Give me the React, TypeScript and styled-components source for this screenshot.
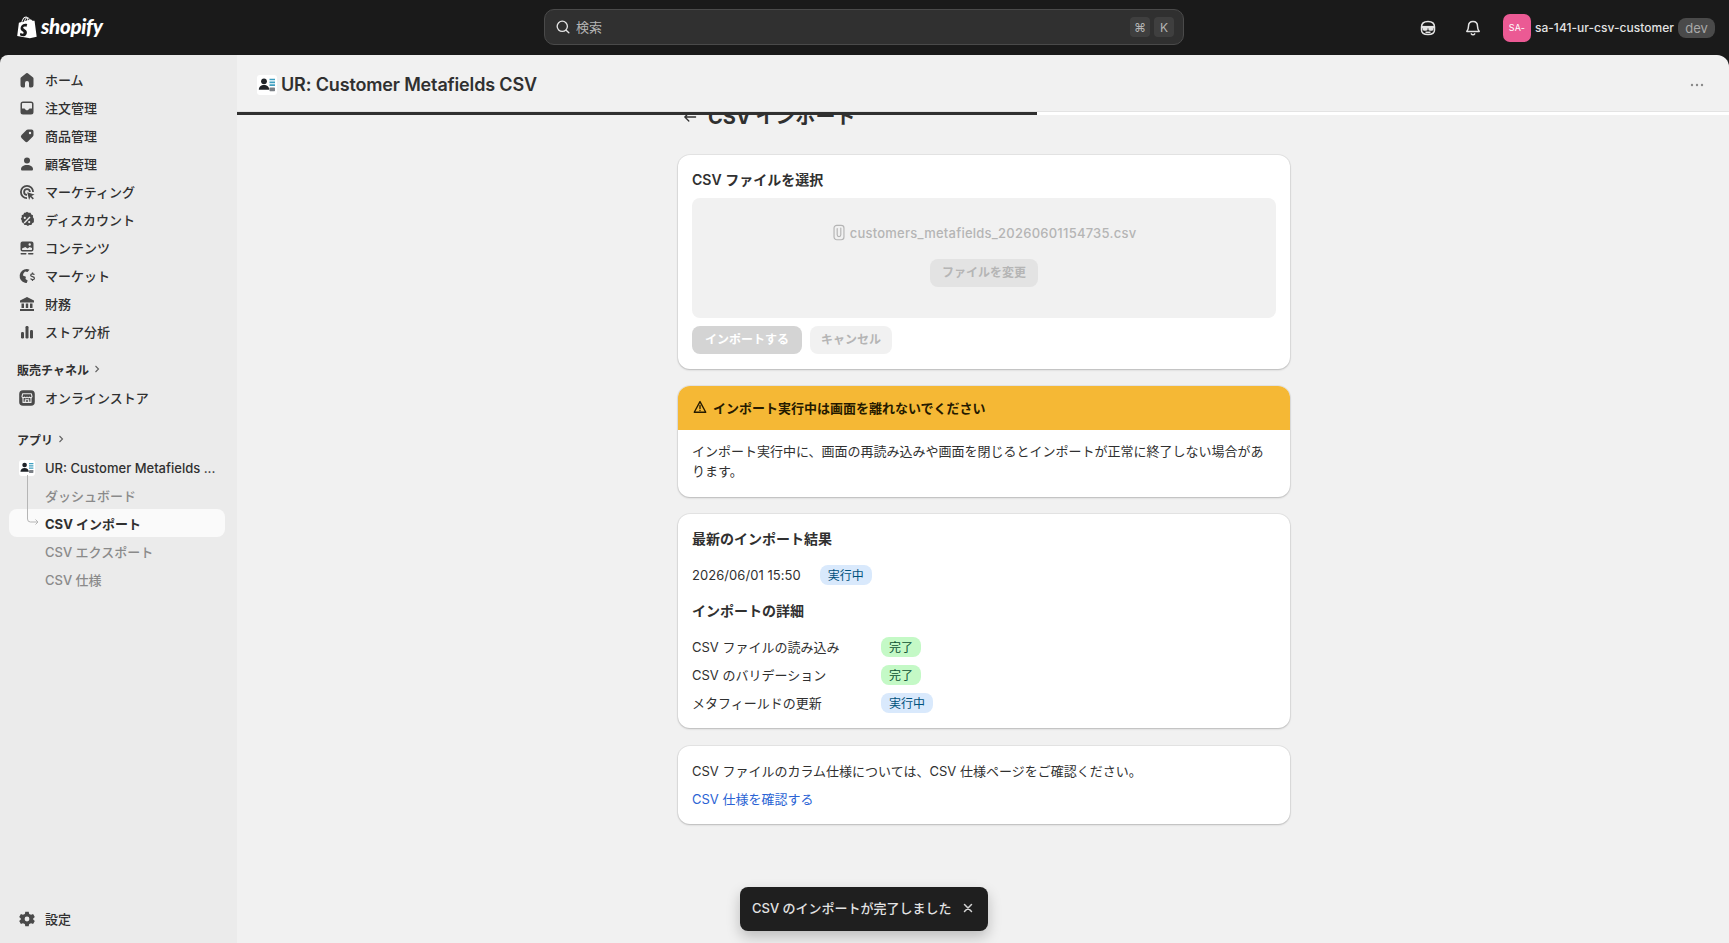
import React from "react"
import styled, { createGlobalStyle } from "styled-components"

const FONT = `Inter, "Noto Sans CJK JP", sans-serif`

const GlobalStyle = createGlobalStyle`
  html, body {
    margin: 0;
    padding: 0;
    height: 100%;
    overflow: hidden;
    background: #1a1a1a;
    font-family: ${FONT};
    font-size: 13px;
    color: #303030;
  }
  #root { height: 100%; }
  * { box-sizing: border-box; }
`

const Shell = styled.div`
  display: flex;
  flex-direction: column;
  height: 943px;
`

/* top bar */
const TopBar = styled.header`
  flex: 0 0 55px;
  display: flex;
  align-items: center;
  position: relative;
  background: #1a1a1a;
  padding: 0 14px 0 17px;
`
const Logo = styled.div`
  display: flex;
  align-items: center;
  gap: 4px;
  color: #fff;
`
const LogoWord = styled.span`
  font-family: Lato, sans-serif;
  font-style: italic;
  font-weight: 900;
  font-size: 20.5px;
  letter-spacing: -0.3px;
  line-height: 1;
  margin-top: -2px;
`
const SearchBox = styled.div`
  position: absolute;
  left: 544px;
  top: 9px;
  width: 640px;
  height: 36px;
  display: flex;
  align-items: center;
  gap: 4px;
  padding: 0 9px 0 9px;
  background: #303030;
  border: 1px solid #4a4a4a;
  border-radius: 10px;
  color: #b5b5b5;
`
const SearchLabel = styled.span`
  flex: 1;
  padding-bottom: 1px;
`
const Key = styled.span`
  width: 20px;
  height: 20px;
  display: flex;
  align-items: center;
  justify-content: center;
  border-radius: 4px;
  background: #3f3f3f;
  color: #b5b5b5;
  font-size: 12px;
`
const TopRight = styled.div`
  margin-left: auto;
  display: flex;
  align-items: center;
`
const TopIcon = styled.span<{ $gap: number }>`
  width: 20px;
  height: 20px;
  display: flex;
  color: #e3e3e3;
  margin-right: ${(p) => p.$gap}px;
`
const Avatar = styled.span`
  width: 28px;
  height: 28px;
  display: flex;
  align-items: center;
  justify-content: center;
  border-radius: 7px;
  background: #eb5a94;
  color: #fff;
  font-size: 9px;
  letter-spacing: 0.2px;
`
const StoreName = styled.span`
  margin-left: 4px;
  color: #e3e3e3;
  font-size: 12px;
  font-weight: 450;
  letter-spacing: 0.03px;
`
const DevBadge = styled.span`
  margin-left: 4px;
  width: 37px;
  height: 20px;
  display: flex;
  align-items: center;
  justify-content: center;
  border-radius: 8px;
  background: #4a4a4a;
  color: #a8a8a8;
  font-size: 13px;
`

/* panels under the top bar */
const Body = styled.div`
  flex: 1;
  min-height: 0;
  display: flex;
`
const Sidebar = styled.nav`
  flex: 0 0 237px;
  display: flex;
  flex-direction: column;
  padding: 10px 12px 11px 9px;
  background: #ebebeb;
  border-top-left-radius: 8px;
`
const NavItem = styled.div<{ $active?: boolean; $child?: boolean }>`
  flex: 0 0 28px;
  height: 28px;
  display: flex;
  align-items: center;
  gap: 8px;
  padding-left: ${(p) => (p.$child ? 36 : 8)}px;
  border-radius: 8px;
  font-weight: ${(p) => (p.$active ? 650 : p.$child ? 450 : 500)};
  color: ${(p) => (p.$active ? "#303030" : p.$child ? "#8a8a8a" : "#303030")};
  background: ${(p) => (p.$active ? "#fafafa" : "transparent")};
  white-space: nowrap;
`
const NavIcon = styled.span`
  flex: 0 0 20px;
  width: 20px;
  height: 20px;
  margin-top: 1px;
  display: flex;
  color: #4a4a4a;
`
const NavLabel = styled.span<{ $latin?: boolean }>`
  overflow: hidden;
  text-overflow: ellipsis;
  padding-top: ${(p) => (p.$latin ? 2 : 0)}px;
`
const SectionLabel = styled.div<{ $top: number }>`
  flex: 0 0 28px;
  display: flex;
  align-items: center;
  gap: 2px;
  margin-top: ${(p) => p.$top}px;
  padding-left: 8px;
  font-size: 12px;
  font-weight: 600;
  color: #303030;
`
const AppIconBox = styled.span<{ $size: number }>`
  flex: 0 0 ${(p) => p.$size}px;
  width: ${(p) => p.$size}px;
  height: ${(p) => p.$size}px;
  display: flex;
  margin: ${(p) => (p.$size < 20 ? "auto" : "0")};
  border-radius: 3px;
  background: #fff;
`
const AppTree = styled.div`
  position: relative;
`
const TreeLine = styled.svg`
  position: absolute;
  left: 16px;
  top: 22px;
  width: 16px;
  height: 54px;
  z-index: 1;
  color: #b5b5b5;
`
const SidebarFoot = styled.div`
  margin-top: auto;
`

const Main = styled.main`
  flex: 1;
  min-width: 0;
  display: flex;
  flex-direction: column;
  background: #f1f1f1;
  border-top-right-radius: 12px;
`
const AppHeader = styled.div`
  flex: 0 0 57px;
  display: flex;
  align-items: center;
  gap: 4px;
  padding: 3px 22px 0 20px;
  border-bottom: 1px solid #e3e3e3;
`
const AppTitle = styled.h1`
  margin: 0;
  font-size: 18px;
  font-weight: 600;
  letter-spacing: -0.15px;
  color: #303030;
`
const MoreDots = styled.span`
  margin-left: auto;
  width: 20px;
  height: 20px;
  display: flex;
  color: #8a8a8a;
`
const ProgressTrack = styled.div`
  flex: 0 0 3px;
  background: #fff;
`
const ProgressFill = styled.div`
  height: 3px;
  background: #303030;
`
const Scroll = styled.div`
  flex: 1;
  min-height: 0;
  overflow: hidden;
  position: relative;
  padding-left: 2px;
`
const Column = styled.div`
  width: 612px;
  margin: -17px auto 0 auto;
  display: flex;
  flex-direction: column;
  gap: 17.6px;
`
const PageHead = styled.div`
  height: 39px;
  padding-bottom: 2px;
  display: flex;
  align-items: center;
  gap: 10px;
  padding-left: 4px;
`
const PageTitle = styled.h2`
  margin: 0;
  font-size: 20px;
  font-weight: 700;
  line-height: 28px;
  color: #303030;
`
const Card = styled.section`
  background: #fff;
  border-radius: 12px;
  overflow: hidden;
  box-shadow: 0 1px 2px rgba(26, 26, 26, 0.22), 0 0 0 1px rgba(26, 26, 26, 0.05);
`
const ResultCard = styled(Card)`
  margin: -1px 0 1px;
`
const CardBody = styled.div`
  padding: 15px 14px;
`
const CardTitle = styled.h3`
  margin: 0;
  font-size: 14px;
  font-weight: 600;
  line-height: 20px;
  color: #303030;
`
const DropZone = styled.div`
  height: 120px;
  margin-top: 8px;
  display: flex;
  flex-direction: column;
  align-items: center;
  padding-top: 25px;
  gap: 16px;
  background: #f1f1f1;
  border-radius: 8px;
`
const FileName = styled.div`
  display: flex;
  align-items: center;
  gap: 4px;
  line-height: 20px;
  font-weight: 550;
  letter-spacing: 0.24px;
  color: #b5b5b5;
`
const Button = styled.span<{ $tone: "primary" | "plain" | "zone" }>`
  height: 28px;
  display: inline-flex;
  align-items: center;
  padding: 0 ${(p) => (p.$tone === "primary" ? 13 : p.$tone === "plain" ? 11 : 12)}px 2px;
  border-radius: 8px;
  font-weight: 600;
  font-size: 12px;
  color: ${(p) => (p.$tone === "primary" ? "#fff" : "#b5b5b5")};
  background: ${(p) =>
    p.$tone === "primary" ? "#d4d4d4" : p.$tone === "zone" ? "#e3e3e3" : "#f1f1f1"};
`
const ButtonRow = styled.div`
  display: flex;
  gap: 8px;
  margin-top: 8px;
`
const BannerHead = styled.div`
  height: 44px;
  display: flex;
  align-items: center;
  gap: 5px;
  padding: 0 14px 2px;
  background: #f5b835;
  color: #251a00;
  font-weight: 650;
`
const BannerBody = styled.p`
  margin: 0;
  padding: 11px 14px 16px;
  line-height: 20px;
  color: #303030;
`
const DateRow = styled.div`
  display: flex;
  align-items: center;
  gap: 19px;
  margin-top: 16px;
  height: 20px;
  letter-spacing: 0.05px;
`
const DetailTitle = styled(CardTitle)`
  margin-top: 16px;
`
const StepList = styled.div`
  display: flex;
  flex-direction: column;
  gap: 8px;
  margin-top: 16px;
`
const StepRow = styled.div`
  display: grid;
  grid-template-columns: 189px auto;
  justify-content: start;
  align-items: center;
  height: 20px;
`
const Badge = styled.span<{ $tone: "info" | "success" }>`
  display: inline-flex;
  align-items: center;
  height: 20px;
  padding: 0 8px 1px;
  border-radius: 8px;
  font-size: 12px;
  color: ${(p) => (p.$tone === "info" ? "#00527c" : "#0c5132")};
  background: ${(p) => (p.$tone === "info" ? "#d9e9fc" : "#c4f9c6")};
`
const NoteText = styled.p`
  margin: 0;
  line-height: 20px;
`
const SpecLink = styled.a`
  display: block;
  margin-top: 8px;
  line-height: 20px;
  color: #2a63d4;
`
const Toast = styled.div`
  position: absolute;
  left: 503px;
  top: 772px;
  width: 248px;
  height: 44px;
  display: flex;
  align-items: center;
  justify-content: space-between;
  padding: 0 12px 3px 12px;
  border-radius: 8px;
  background: #1f1f1f;
  color: #e3e3e3;
  font-weight: 550;
  box-shadow: 0 6px 14px rgba(0, 0, 0, 0.22);
`
const ToastClose = styled.span`
  width: 16px;
  height: 16px;
  display: flex;
  color: #d4d4d4;
`

/* icons, 20 box */
const Svg = ({ children }: { children: React.ReactNode }) => (
  <svg viewBox="0 0 20 20" width={20} height={20} fill="currentColor">
    {children}
  </svg>
)

const icons: Record<string, React.ReactNode> = {
  home: (
    <path d="M9.2 3.3a1.3 1.3 0 0 1 1.6 0l5 3.9c.4.3.7.8.7 1.3V15a2.5 2.5 0 0 1-2.5 2.5h-.75A1.25 1.25 0 0 1 12 16.25V13a2 2 0 1 0-4 0v3.25c0 .7-.56 1.25-1.25 1.25H6A2.5 2.5 0 0 1 3.5 15V8.5c0-.5.3-1 .7-1.3z" />
  ),
  orders: (
    <path
      fillRule="evenodd"
      d="M6 3.500h8A2.500 2.500 0 0 1 16.500 6v8a2.500 2.500 0 0 1-2.500 2.500H6A2.500 2.500 0 0 1 3.500 14V6A2.500 2.500 0 0 1 6 3.500zM5 6v4.500h2.200c.5 0 .9.3 1.100.7.2.6.8 1 1.700 1s1.500-.4 1.700-1c.2-.4.6-.7 1.100-.7H15V6c0-.6-.4-1-1-1H6c-.6 0-1 .4-1 1z"
    />
  ),
  tag: (
    <path
      fillRule="evenodd"
      d="M10.900 3.500h3.600a2 2 0 0 1 2 2v3.600c0 .5-.2 1-.6 1.400l-5 5a2 2 0 0 1-2.800 0l-3.600-3.600a2 2 0 0 1 0-2.800l5-5c.4-.4.9-.6 1.400-.6zM13 5.800a1.200 1.200 0 1 0 0 2.400 1.200 1.200 0 0 0 0-2.400z"
    />
  ),
  person: (
    <>
      <circle cx="10" cy="6.500" r="3" />
      <path d="M10 11c-3.600 0-6 1.900-6 4.200 0 .8.6 1.300 1.300 1.300h9.400c.7 0 1.300-.5 1.300-1.300C16 12.900 13.600 11 10 11z" />
    </>
  ),
  target: (
    <>
      <path
        fillRule="evenodd"
        d="M10 3a7 7 0 0 1 7 7h-1.800A5.200 5.200 0 1 0 10 15.200V17a7 7 0 0 1 0-14zm0 3.200A3.800 3.800 0 0 1 13.800 10H12a2 2 0 1 0-2 2v1.800a3.800 3.800 0 0 1 0-7.600z"
      />
      <path d="M10.200 10.200l7.300 2.400-3 1.300 2.400 2.300-1.200 1.200-2.300-2.400-1.300 3z" />
    </>
  ),
  discount: (
    <path
      fillRule="evenodd"
      d="M8.400 2.800L10 1.800l1.600 1 1.900-.1.800 1.700 1.700.9-.1 1.900 1 1.600-.0 1.600.0 1.900-1.700 1-.8 1.700-1.900-.1-1.600 1-1.600-1-1.900.1-.8-1.700-1.700-1-.1-1.900-1-1.600 1-1.600-.1-1.900 1.700-.9.8-1.700zM7.800 6.800a1.100 1.100 0 1 0 0 2.200 1.100 1.100 0 0 0 0-2.200zm4.400 4.200a1.100 1.100 0 1 0 0 2.200 1.100 1.100 0 0 0 0-2.200zm.3-4.500l-5.800 5.900 1 1 5.800-5.900z"
    />
  ),
  content: (
    <>
      <path
        fillRule="evenodd"
        d="M5.500 3.500h9a2 2 0 0 1 2 2v6a2 2 0 0 1-2 2h-9a2 2 0 0 1-2-2v-6a2 2 0 0 1 2-2zM5 10.500v1c0 .3.2.5.5.5h9c.3 0 .5-.2.5-.5v-1.500l-2.400-1-2 1.600-2.300-1.500zM12.700 5.300a1.200 1.200 0 1 0 0 2.400 1.200 1.200 0 0 0 0-2.400z"
      />
      <rect x="3.500" y="15" width="6" height="1.500" rx=".7" />
      <rect x="11" y="15" width="5.500" height="1.500" rx=".7" />
    </>
  ),
  market: (
    <>
      <path d="M9.800 3a7 7 0 0 0-1.800 13.800c.6.100 1 .2 1.700.2l1-2.500-2.200-1.500.4-2.200-3-1.200.5-2.100L8 5.500l2.500.5 2-2.300A7 7 0 0 0 9.800 3z" />
      <path
        fill="none"
        stroke="currentColor"
        strokeWidth="1.300"
        d="M17.300 8.800c-.3-.7-1-1-1.800-1-1 0-1.800.5-1.800 1.400 0 2 3.700 1 3.700 3 0 1-.9 1.500-1.900 1.500-.9 0-1.600-.4-1.900-1.100M15.500 6.600v1.200M15.500 13.700v1.200"
      />
    </>
  ),
  bank: (
    <path
      fillRule="evenodd"
      d="M10 3l7 3.400v2.100H3V6.400zM4.500 9.500h2.500v4.500H4.500zM8.800 9.500h2.400v4.500H8.800zM13 9.500h2.500v4.500H13zM3 15h14v2H3z"
    />
  ),
  chart: (
    <>
      <rect x="4" y="10" width="3" height="6.500" rx="1.200" />
      <rect x="8.500" y="4" width="3" height="12.500" rx="1.200" />
      <rect x="13" y="8" width="3" height="8.500" rx="1.200" />
    </>
  ),
  store: (
    <>
      <rect x="2.200" y="2.200" width="15.600" height="15.600" rx="3.800" />
      <g fill="none" stroke="#ebebeb" strokeWidth="1.100" strokeLinejoin="round">
        <path d="M5.600 5.800h8.800l.6 2.800a1.500 1.500 0 0 1-2.500.6 1.800 1.800 0 0 1-2.500 0 1.800 1.800 0 0 1-2.500 0 1.500 1.500 0 0 1-2.500-.6z" />
        <path d="M6 9.800v4.600h8V9.800M8.300 14.400v-2.600h3.400v2.600" />
      </g>
    </>
  ),
  gear: (
    <path
      fillRule="evenodd"
      d="M8.300 2.800h3.400l.5 2.100 1.900.9 2-.8 1.700 3-1.600 1.400v1.200l1.600 1.400-1.700 3-2-.8-1.900.9-.5 2.100H8.300l-.5-2.100-1.900-.9-2 .8-1.700-3 1.600-1.400V9.400L2.200 8l1.700-3 2 .8 1.900-.9zM10 7.600a2.400 2.400 0 1 0 0 4.800 2.400 2.400 0 0 0 0-4.800z"
    />
  ),
}

const ShopifyBag = () => (
  <svg viewBox="0 0 19 21" width="20" height="23">
    <path
      fill="#fff"
      d="M16.700 4.400c0-.1-.1-.2-.2-.2l-1.800-.1-1.300-1.300c-.1-.1-.4-.1-.5 0l-.7.2C11.800 1.800 11.200.800 10 .800h-.1C9.500.300 9.100.100 8.700.100 6 .100 4.700 3.500 4.300 5.200l-1.900.6c-.6.200-.6.200-.7.800L.200 18.500 12.200 20.700l6.500-1.400zM11.700 3.200l-1 .3v-.2c0-.7-.1-1.200-.2-1.600.5.100.9.800 1.200 1.500zM9.600 1.700c.1.400.2 1 .2 1.800v.1l-2.100.7c.4-1.600 1.200-2.300 1.900-2.600zM8.800 1c.1 0 .2 0 .4.100C8.200 1.600 7.200 2.800 6.700 4.900l-1.600.5C5.500 3.800 6.600 1 8.800 1z"
    />
    <path
      fill="#1a1a1a"
      d="M9.700 7.500l-.7 2.300s-.8-.4-1.700-.3c-1.400.1-1.400 1-1.400 1.200.1 1.200 3.300 1.500 3.500 4.300.1 2.200-1.200 3.700-3.100 3.800-2.300.1-3.500-1.200-3.500-1.200l.5-2s1.200.9 2.200.9c.6 0 .9-.5.800-.9-.1-1.600-2.700-1.500-2.900-4.100-.1-2.200 1.300-4.400 4.500-4.600 1.200-.1 1.800.3 1.800.3z"
    />
  </svg>
)

const AppGlyph = () => (
  <svg viewBox="0 0 20 20" width="100%" height="100%">
    <circle cx="7" cy="6.300" r="2.900" fill="#1f2328" />
    <path d="M1.800 14.800c0-3 2.200-4.800 5.200-4.800s5.200 1.800 5.200 4.800z" fill="#1f2328" />
    <path d="M12.500 4.500h5.500M12.500 7.300h5.500M12.500 10.100h5.500" stroke="#3f9fc0" strokeWidth="1.700" />
    <rect x="12.500" y="12.600" width="5.500" height="3.600" rx=".6" fill="#7a7f85" />
  </svg>
)

const mainNav = [
  ["home", "ホーム"],
  ["orders", "注文管理"],
  ["tag", "商品管理"],
  ["person", "顧客管理"],
  ["target", "マーケティング"],
  ["discount", "ディスカウント"],
  ["content", "コンテンツ"],
  ["market", "マーケット"],
  ["bank", "財務"],
  ["chart", "ストア分析"],
]

const Chevron = () => (
  <svg viewBox="0 0 12 12" width="12" height="12" fill="none" stroke="#616161" strokeWidth="1.100">
    <path d="M4.500 3l3 3-3 3" />
  </svg>
)

export default function App() {
  return (
    <>
      <GlobalStyle />
      <Shell>
        <TopBar>
          <Logo>
            <ShopifyBag />
            <LogoWord>shopify</LogoWord>
          </Logo>
          <SearchBox>
            <svg viewBox="0 0 20 20" width="18" height="18" fill="none" stroke="#e3e3e3" strokeWidth="1.500" strokeLinecap="round">
              <circle cx="9.200" cy="9.200" r="5.700" />
              <path d="M13.500 13.500l3 3" />
            </svg>
            <SearchLabel>検索</SearchLabel>
            <Key>⌘</Key>
            <Key>K</Key>
          </SearchBox>
          <TopRight>
            <TopIcon $gap={25}>
              <svg viewBox="0 0 20 20" width="20" height="20" fill="none" stroke="currentColor" strokeWidth="1.500">
                <path d="M3.500 9c0-3.500 2.500-5.500 6.500-5.500s6.500 2 6.500 5.500v3c0 3-2.500 4.500-6.500 4.500s-6.500-1.500-6.500-4.500z" />
                <path d="M3.500 9h13" strokeWidth="2.200" />
                <rect x="5.200" y="9.500" width="3.800" height="2.600" rx="1" fill="currentColor" />
                <rect x="11" y="9.500" width="3.800" height="2.600" rx="1" fill="currentColor" />
                <path d="M7.500 14.300h5" />
              </svg>
            </TopIcon>
            <TopIcon $gap={20}>
              <svg viewBox="0 0 20 20" width="20" height="20" fill="none" stroke="currentColor" strokeWidth="1.500" strokeLinejoin="round">
                <path d="M10 3.500c-2.800 0-4.500 2-4.500 4.800 0 2.200-.6 3.700-1.700 5.200h12.400c-1.100-1.500-1.700-3-1.700-5.200 0-2.800-1.700-4.800-4.500-4.800z" />
                <path d="M8.300 15.800c.4.600 1 .9 1.700.9s1.300-.3 1.700-.9" strokeLinecap="round" />
              </svg>
            </TopIcon>
            <Avatar>SA-</Avatar>
            <StoreName>sa-141-ur-csv-customer</StoreName>
            <DevBadge>dev</DevBadge>
          </TopRight>
        </TopBar>

        <Body>
          <Sidebar>
            {mainNav.map(([icon, label]) => (
              <NavItem key={label}>
                <NavIcon>
                  <Svg>{icons[icon]}</Svg>
                </NavIcon>
                <NavLabel>{label}</NavLabel>
              </NavItem>
            ))}
            <SectionLabel $top={10}>
              販売チャネル <Chevron />
            </SectionLabel>
            <NavItem>
              <NavIcon>
                <Svg>{icons.store}</Svg>
              </NavIcon>
              <NavLabel>オンラインストア</NavLabel>
            </NavItem>
            <SectionLabel $top={14}>
              アプリ <Chevron />
            </SectionLabel>
            <AppTree>
              <NavItem>
                <NavIcon>
                  <AppIconBox $size={16}>
                    <AppGlyph />
                  </AppIconBox>
                </NavIcon>
                <NavLabel $latin>UR: Customer Metafields ...</NavLabel>
              </NavItem>
              <NavItem $child>ダッシュボード</NavItem>
              <NavItem $child $active>
                CSV インポート
              </NavItem>
              <NavItem $child>CSV エクスポート</NavItem>
              <NavItem $child>CSV 仕様</NavItem>
              <TreeLine viewBox="0 0 16 54" fill="none" stroke="currentColor" strokeWidth="1">
                <path d="M2.500 0v44a3 3 0 0 0 3 3h7.500M10.500 44.500l2.500 2.500-2.500 2.500" />
              </TreeLine>
            </AppTree>
            <SidebarFoot>
              <NavItem>
                <NavIcon>
                  <Svg>{icons.gear}</Svg>
                </NavIcon>
                <NavLabel>設定</NavLabel>
              </NavItem>
            </SidebarFoot>
          </Sidebar>

          <Main>
            <AppHeader>
              <AppIconBox $size={20}>
                <AppGlyph />
              </AppIconBox>
              <AppTitle>UR: Customer Metafields CSV</AppTitle>
              <MoreDots>
                <Svg>
                  <circle cx="5" cy="10" r="1.200" />
                  <circle cx="10" cy="10" r="1.200" />
                  <circle cx="15" cy="10" r="1.200" />
                </Svg>
              </MoreDots>
            </AppHeader>
            <ProgressTrack>
              <ProgressFill style={{ width: "53.6%" }} />
            </ProgressTrack>
            <Scroll>
              <Column>
                <PageHead>
                  <svg viewBox="0 0 20 20" width="16" height="16" fill="none" stroke="#303030" strokeWidth="1.600" strokeLinecap="round" strokeLinejoin="round">
                    <path d="M17 10H3.500M8.500 5l-5 5 5 5" />
                  </svg>
                  <PageTitle>CSV インポート</PageTitle>
                </PageHead>
                <Card>
                  <CardBody>
                    <CardTitle>CSV ファイルを選択</CardTitle>
                    <DropZone>
                      <FileName>
                        <svg viewBox="0 0 14 20" width="14" height="18" fill="none" stroke="#b5b5b5" strokeWidth="1.300" strokeLinecap="round">
                          <rect x="1.500" y="1.500" width="11" height="16" rx="3" />
                          <path d="M5 5v7a2 2 0 0 0 4 0V4.500" />
                        </svg>
                        customers_metafields_20260601154735.csv
                      </FileName>
                      <Button $tone="zone">ファイルを変更</Button>
                    </DropZone>
                    <ButtonRow>
                      <Button $tone="primary">インポートする</Button>
                      <Button $tone="plain">キャンセル</Button>
                    </ButtonRow>
                  </CardBody>
                </Card>
                <Card>
                  <BannerHead>
                    <svg viewBox="0 0 20 20" width="16" height="16" fill="none" stroke="#251a00" strokeWidth="1.700" strokeLinejoin="round" strokeLinecap="round">
                      <path d="M10 3.200L2.800 16.500h14.400z" />
                      <path d="M10 8v4M10 14.300v.1" />
                    </svg>
                    インポート実行中は画面を離れないでください
                  </BannerHead>
                  <BannerBody>
                    インポート実行中に、画面の再読み込みや画面を閉じるとインポートが正常に終了しない場合があります。
                  </BannerBody>
                </Card>
                <ResultCard>
                  <CardBody>
                    <CardTitle>最新のインポート結果</CardTitle>
                    <DateRow>
                      <span>2026/06/01 15:50</span>
                      <Badge $tone="info">実行中</Badge>
                    </DateRow>
                    <DetailTitle>インポートの詳細</DetailTitle>
                    <StepList>
                      <StepRow>
                        <span>CSV ファイルの読み込み</span>
                        <Badge $tone="success">完了</Badge>
                      </StepRow>
                      <StepRow>
                        <span>CSV のバリデーション</span>
                        <Badge $tone="success">完了</Badge>
                      </StepRow>
                      <StepRow>
                        <span>メタフィールドの更新</span>
                        <Badge $tone="info">実行中</Badge>
                      </StepRow>
                    </StepList>
                  </CardBody>
                </ResultCard>
                <Card>
                  <CardBody>
                    <NoteText>CSV ファイルのカラム仕様については、CSV 仕様ページをご確認ください。</NoteText>
                    <SpecLink>CSV 仕様を確認する</SpecLink>
                  </CardBody>
                </Card>
              </Column>
              <Toast>
                CSV のインポートが完了しました
                <ToastClose>
                  <svg viewBox="0 0 16 16" width="16" height="16" fill="none" stroke="currentColor" strokeWidth="1.500" strokeLinecap="round">
                    <path d="M4.500 4.500l7 7M11.500 4.500l-7 7" />
                  </svg>
                </ToastClose>
              </Toast>
            </Scroll>
          </Main>
        </Body>
      </Shell>
    </>
  )
}
